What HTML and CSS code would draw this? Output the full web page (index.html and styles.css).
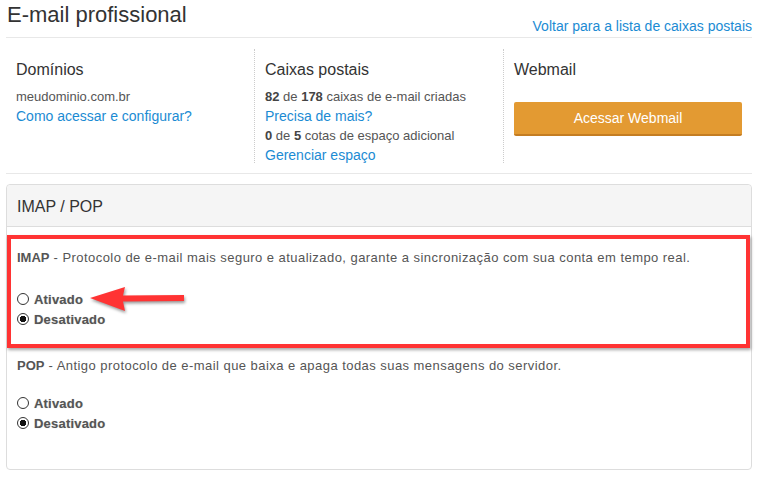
FILE: index.html
```html
<!DOCTYPE html>
<html lang="pt-BR">
  <head>
    <meta charset="UTF-8" />
    <title>E-mail profissional</title>
    <link rel="stylesheet" href="styles.css">
  </head>
  <body>
    <div class="page">
      <!-- Page title with back link -->
      <div class="page-header">
        <h1>E-mail profissional</h1>
        <a href="#" class="back-link">Voltar para a lista de caixas postais</a>
      </div>

      <!-- Summary: domains, mailboxes, webmail -->
      <div class="summary">
        <div class="summary-col">
          <h3>Domínios</h3>
          <p class="muted">meudominio.com.br</p>
          <a href="#">Como acessar e configurar?</a>
        </div>
        <div class="summary-col">
          <h3>Caixas postais</h3>
          <p class="muted"><b>82</b> de <b>178</b> caixas de e-mail criadas</p>
          <a href="#">Precisa de mais?</a>
          <p class="muted"><b>0</b> de <b>5</b> cotas de espaço adicional</p>
          <a href="#">Gerenciar espaço</a>
        </div>
        <div class="summary-col">
          <h3>Webmail</h3>
          <button class="btn-webmail">Acessar Webmail</button>
        </div>
      </div>

      <!-- IMAP / POP settings -->
      <div class="panel">
        <div class="panel-heading">IMAP / POP</div>
        <div class="panel-body">
          <div class="protocol highlight">
            <p><b>IMAP</b> - Protocolo de e-mail mais seguro e atualizado, garante a sincronização com sua conta em tempo real.</p>
            <label class="option"><input type="radio" name="imap" /> Ativado</label>
            <label class="option"><input type="radio" name="imap" checked /> Desativado</label>
          </div>
          <div class="protocol">
            <p><b>POP</b> - Antigo protocolo de e-mail que baixa e apaga todas suas mensagens do servidor.</p>
            <label class="option"><input type="radio" name="pop" /> Ativado</label>
            <label class="option"><input type="radio" name="pop" checked /> Desativado</label>
          </div>
        </div>
      </div>

      <!-- Annotation arrow pointing at "Ativado" -->
      <svg class="arrow" width="110" height="40" viewBox="0 0 110 40">
        <polygon points="2,18 37,7 35,15.5 96,15 96,21 35,21.5 37,31" fill="#f33" />
      </svg>
    </div>
  </body>
</html>
```

FILE: styles.css
```css
/* Basic page setup */
body {
  margin: 0;
  font-family: "Liberation Sans", Arial, sans-serif;
  font-size: 13px;
  color: #555;
  background-color: #fff;
}

a {
  color: #1b8bd3;
  text-decoration: none;
  font-size: 14px;
}

.page {
  position: relative; /* anchor for the annotation arrow */
  padding: 0 10px 0 6px;
}

.page-header {
  display: flex;
  justify-content: space-between;
  align-items: flex-end;
  height: 37px;
  border-bottom: 1px solid #e8e8e8;
}

.page-header h1 {
  margin: 0 0 9px 1px;
  font-size: 22px;
  font-weight: normal;
  color: #333;
}

.back-link {
  margin-bottom: 3px;
}

/* Summary row */
.summary {
  display: flex;
  padding: 11px 0 10px;
  border-bottom: 1px solid #e8e8e8;
}

.summary-col {
  flex: 1;
  height: 114px;
  padding: 0 10px;
}

.summary-col + .summary-col {
  border-left: 1px dotted #ccc;
}

.summary-col h3 {
  margin: 12px 0 8px;
  font-size: 16px;
  font-weight: normal;
  color: #333;
}

.summary-col p {
  margin: 0;
  line-height: 19px;
}

.summary-col a {
  display: block;
  line-height: 20px;
}

.summary-col b {
  color: #444;
}

.btn-webmail {
  display: block;
  width: 100%;
  height: 34px;
  margin-top: 23px;
  border: none;
  border-bottom: 2px solid #c47d22;
  border-radius: 2px;
  background-color: #e39a32;
  color: #fff;
  font-family: inherit;
  font-size: 14px;
}

/* IMAP / POP panel */
.panel {
  margin-top: 10px;
  height: 284px;
  border: 1px solid #ddd;
  border-radius: 4px;
}

.panel-heading {
  height: 41px;
  padding: 0 10px;
  line-height: 44px;
  background-color: #f5f5f5;
  border-bottom: 1px solid #ddd;
  border-radius: 4px 4px 0 0;
  font-size: 16px;
  color: #333;
}

.panel-body {
  padding-top: 8px;
}

.protocol {
  padding: 9px 10px 18px;
}

.protocol p {
  margin: 0 0 18px;
  line-height: 18px;
  letter-spacing: 0.45px;
}

.protocol b {
  color: #555;
  letter-spacing: 0;
}

/* Red highlight frame around the IMAP block */
.highlight {
  margin-right: 1px;
  padding: 10px 6px 15px;
  border: 4px solid #f33;
  box-shadow: 1px 2px 3px rgba(0, 0, 0, 0.35);
}

.highlight p {
  margin-bottom: 22px;
}

.option {
  display: flex;
  align-items: center;
  height: 20px;
  font-weight: bold;
  color: #555;
  letter-spacing: 0.2px;
  text-shadow: 0 0 1px rgba(0, 0, 0, 0.25);
}

.option input {
  appearance: none;
  width: 12px;
  height: 12px;
  margin: 0 5px 0 0;
  border: 1px solid #333;
  border-radius: 50%;
  background-color: #fff;
}

.option input:checked {
  background: radial-gradient(circle, #111 0 3px, #fff 3.5px);
}

.arrow {
  position: absolute;
  left: 88px;
  top: 280px;
  filter: drop-shadow(1px 2px 1.5px rgba(0, 0, 0, 0.4));
}
```
